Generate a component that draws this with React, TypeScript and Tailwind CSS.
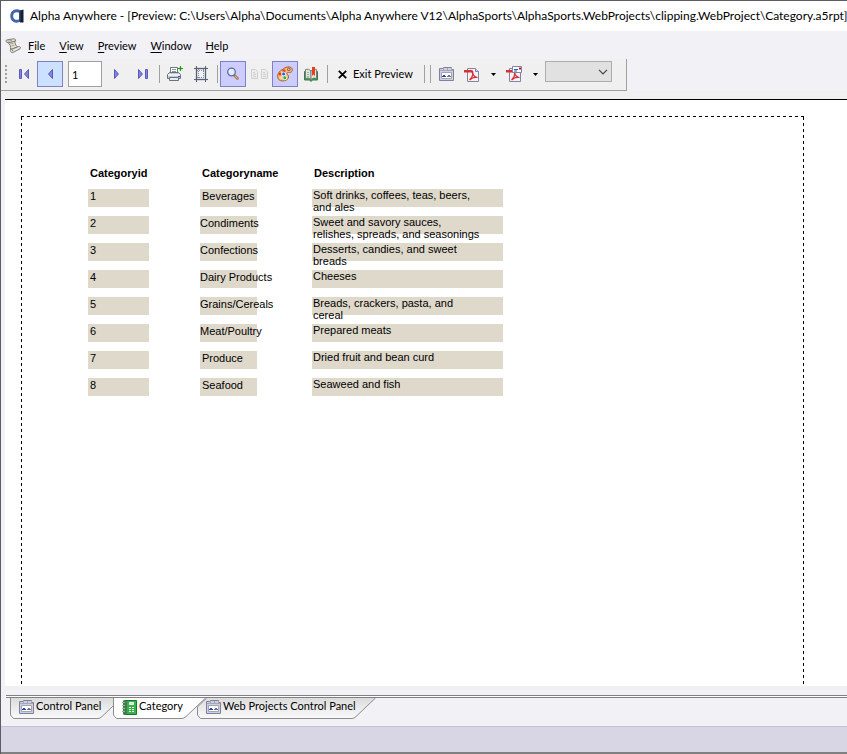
import React from "react";
import clsx from "clsx";

interface Category {
  id: number;
  name: string;
  description: string[];
  inset?: boolean;
}

const menus = ["File", "View", "Preview", "Window", "Help"];

const categories: Category[] = [
  { id: 1, name: "Beverages", description: ["Soft drinks, coffees, teas, beers,", "and ales"], inset: true },
  { id: 2, name: "Condiments", description: ["Sweet and savory sauces,", "relishes, spreads, and seasonings"] },
  { id: 3, name: "Confections", description: ["Desserts, candies, and sweet", "breads"] },
  { id: 4, name: "Dairy Products", description: ["Cheeses"] },
  { id: 5, name: "Grains/Cereals", description: ["Breads, crackers, pasta, and", "cereal"] },
  { id: 6, name: "Meat/Poultry", description: ["Prepared meats"] },
  { id: 7, name: "Produce", description: ["Dried fruit and bean curd"], inset: true },
  { id: 8, name: "Seafood", description: ["Seaweed and fish"], inset: true },
];

// Icons

function AlphaLogo() {
  return (
    <svg width="14" height="14" viewBox="0 0 14 14" fill="none" className="shrink-0">
      <path d="M10 2.500C5 .5 1.700 3 1.700 7s3.300 6.500 8.300 4.500" stroke="#3f66ae" strokeWidth="2.800" />
      <path d="M10 1.500 13.500.5v13H10Z" fill="#16202e" />
      <path d="M9 1.500h1.500v11H9Z" fill="#2c4a80" />
    </svg>
  );
}

function ScriptIcon() {
  return (
    <svg width="16" height="16" viewBox="0 0 16 16" fill="#e4e2d8" stroke="#7d7a70">
      <path d="M3 4.500 10 3c-.5 2 .5 4 2.500 6L5.500 11.500C6 8.500 5 6.500 3 4.500Z" />
      <path d="M1.500 2 8.500.8c1.500-.2 2.500.8 2 2.200L3.500 4.800C1.500 5 .2 3 1.500 2Z" />
      <path d="m6 11.500 7.500-3c1.500-.4 2.500 1 1.500 2.300L8 14.500c-2 .8-3.500-1.800-2-3Z" />
      <path d="m5.500 6 3-.8M6.500 8l3-1M2.500 3.200 7 2.400" stroke="#a8a498" />
      <path d="M7 13.200c.6-.2.800-.9.300-1.300" stroke="#5c584e" />
    </svg>
  );
}

function ArrowIcon({ dir, bar }: { dir: "left" | "right"; bar?: boolean }) {
  return (
    <svg width="12" height="12" viewBox="0 0 12 12" fill="#8484d8" stroke="#5a5ac0" className={clsx(dir === "right" && "-scale-x-100")}>
      {bar && <path d="M1.500 1.500h2v9h-2z" />}
      <path d={bar ? "M10.500 1.500v9L6.500 6Z" : "M8.500 1.500v9L4.500 6Z"} />
    </svg>
  );
}

function PrinterIcon() {
  return (
    <svg width="16" height="16" viewBox="0 0 16 16" fill="none">
      <path d="M3.500 7.500v-6h7v6" fill="#fff" stroke="#707880" />
      <path d="M5 3.500h4M5 5.500h4" stroke="#8c949c" />
      <path d="M.5 12.500v-4l2-2h9l2 2v4Z" fill="#c4ccd4" stroke="#68727c" />
      <path d="M1 9h12" stroke="#eef1f4" strokeWidth="2" />
      <path d="M2.500 11.500h9v3h-9z" fill="#e8ecf0" stroke="#68727c" />
      <path d="M11 10h2v1h-2z" fill="#2050f0" />
      <path d="M13.500 0v5M11 2.500h5" stroke="#14a014" />
      <path d="M12.500 1.500h2v2h-2z" fill="#14a014" />
    </svg>
  );
}

function MarginsIcon() {
  return (
    <svg width="14" height="16" viewBox="0 0 14 16" fill="none">
      <path d="M1 1h12v14H1z" fill="#d4dae4" />
      <path d="M4 4h6v8H4z" fill="#eef1f6" />
      <path d="M2.500 0v16M11.500 0v16M0 2.500h14M0 13.500h14" stroke="#59616c" />
      <path d="M4.500 3v10M9.500 3v10M3 4.500h8M3 11.500h8" stroke="#7f8894" strokeDasharray="1 1" />
    </svg>
  );
}

function ZoomIcon() {
  return (
    <svg width="14" height="14" viewBox="0 0 14 14" fill="none">
      <path d="m8.500 8.500 3 3" stroke="#a87850" strokeWidth="2.600" strokeLinecap="round" />
      <path d="m9 9 2.500 2.500" stroke="#e8b880" />
      <circle cx="5.500" cy="5" r="3.800" fill="#dcecff" stroke="#6868a0" strokeWidth="1.300" />
      <path d="M3.500 4.500 5 3" stroke="#fff" />
    </svg>
  );
}

function PagesIcon() {
  return (
    <svg width="17" height="12" viewBox="0 0 17 12" fill="#ececec" stroke="#cfcfcf">
      <path d="M.5 1.500h4l2 2v7h-6zM10.500 1.500h4l2 2v7h-6z" />
      <path d="M2 4.500h2M2 6.500h3M2 8.500h3M12 4.500h2M12 6.500h3M12 8.500h3" />
    </svg>
  );
}

function PaletteIcon() {
  return (
    <svg width="16" height="16" viewBox="0 0 16 16">
      <path
        d="M6 3.200C8 1 12 .2 14 1.500c2 1.400 1.800 4-.3 4.800-1.700.6-3-.3-3.800.7-.8 1.100 1.900 1.800 1.800 3.800-.1 2.400-3 4.200-6 4.200C2.500 15 .5 13 .6 10.200.7 7.300 3 4.200 6 3.200Z"
        fill="#f4bc78"
        stroke="#a86224"
      />
      <circle cx="7" cy="4.800" r="1.600" fill="#e03c28" />
      <circle cx="11.800" cy="3.400" r="1.300" fill="#ccccff" stroke="#8c5420" />
      <circle cx="3.200" cy="8" r="1.500" fill="#e03c28" />
      <circle cx="6.600" cy="8" r="2" fill="#3060e8" stroke="#fff" strokeWidth=".8" />
      <circle cx="4" cy="11.600" r="1.500" fill="#f8d8a0" />
      <circle cx="7.800" cy="11.800" r="2" fill="#30b040" stroke="#fff" strokeWidth=".8" />
    </svg>
  );
}

function BookIcon() {
  return (
    <svg width="14" height="15" viewBox="0 0 14 15">
      <path d="M.5 4.500v8.500h5l1.500 1.500L8.500 13h5V4.500Z" fill="#3c9c50" stroke="#3c7c4c" />
      <path d="M1.500 2.500c2-.6 4-.2 5.500 1.500v8.500c-1.500-1.500-3.500-1.800-5.500-1Z" fill="#dfe4df" stroke="#788078" />
      <path d="M12.500 2.500c-2-.6-4-.2-5.500 1.500v8.500c1.500-1.500 3.500-1.800 5.500-1Z" fill="#ecece6" stroke="#788078" />
      <path d="M3 5.500h2M3 7.500h2M3 9.500h2" stroke="#a4aca4" />
      <path d="M8 0h3v9L9.500 7.500 8 9Z" fill="#e8401c" />
    </svg>
  );
}

function PanelIcon() {
  return (
    <svg width="15" height="14" viewBox="0 0 15 14" fill="none">
      <path d="M.5 13.500v-12h4v-1h8v2h2v11Z" fill="#d0d0dc" stroke="#8080a0" />
      <path d="M1 3.500h13M4.500 1v2M8.500 1v2M12.500 1v2" stroke="#a4a4ba" />
      <path d="M2.500 5.500h10v6h-10z" fill="#fff" stroke="#a4a4b4" />
      <path d="M4 8h2v1h1v1H3V9h1Z" fill="#2044b0" />
      <path d="M9 8h2v1h1v1H8V9h1Z" fill="#70747c" />
    </svg>
  );
}

function PdfIcon({ mail }: { mail?: boolean }) {
  return (
    <svg width="16" height="16" viewBox="0 0 16 16" fill="none">
      <path d="M3.500 2.500h8l3 3v10h-11Z" fill="#f2f2f8" stroke="#8484a0" />
      {!mail && <path d="M11.500 2.500v3h3" fill="#d4d4e0" stroke="#8484a0" />}
      <path d="M8.500 7c1 3 2.500 4.500 5 4.500-3-.5-6 .5-7.500 2.500M8.500 7c.5 2.500-.8 5-3 7" stroke="#d83030" strokeWidth="1.200" />
      <path d="M0 4h7c2 0 2.500 1 2.500 3.500H8C8 6.500 7.500 6.500 7 6.500H0Z" fill="#d83030" />
      {mail && (
        <>
          <path d="M6.500.5h9v6h-9z" fill="#fff" stroke="#8484a0" />
          <path d="M8 3.500h4M8 5h3" stroke="#3058c8" />
          <path d="M13 1.500h2v2h-2z" fill="#c81c1c" />
        </>
      )}
    </svg>
  );
}

function ReportIcon() {
  return (
    <svg width="15" height="15" viewBox="0 0 15 15" fill="none">
      <path d="M2.500.5h12v14h-12z" fill="#38b04c" stroke="#187828" />
      <path d="M1 .5h4v14H1z" fill="#447c4c" />
      <path d="M0 2.500h3M0 5.500h3M0 8.500h3M0 11.500h3" stroke="#a8b0a8" />
      <path d="M7.500 2.500h4v2h-4z" fill="#c8f0cc" stroke="#eaffea" />
      <path d="M7 7.500h2M10 7.500h2M7 9.500h2M10 9.500h2M7 11.500h2M10 11.500h2" stroke="#eaffea" />
    </svg>
  );
}

// Toolbar parts

interface ToolButtonProps {
  label: string;
  active?: boolean;
  hot?: boolean;
  disabled?: boolean;
  children: React.ReactNode;
}

function ToolButton({ label, active, hot, disabled, children }: ToolButtonProps) {
  return (
    <button
      type="button"
      aria-label={label}
      disabled={disabled}
      className={clsx(
        "flex h-[26px] w-[26px] shrink-0 items-center justify-center border",
        active && "border-[#8080c4] bg-[#ccccff]",
        hot && "border-[#8080c4] bg-[#cce0ff]",
        !active && !hot && "border-transparent"
      )}
    >
      {children}
    </button>
  );
}

function DropArrow({ label }: { label: string }) {
  return (
    <button type="button" aria-label={label} className="flex h-[26px] w-4 shrink-0 items-center justify-center">
      <svg width="5" height="3" viewBox="0 0 5 3">
        <path d="M0 0h5L2.500 3Z" fill="#000" />
      </svg>
    </button>
  );
}

function Separator() {
  return <div className="ml-[3px] mr-[2px] h-[18px] w-px shrink-0 bg-[#a0a0a0]" />;
}

// Bottom tabs

interface SheetTabProps {
  title: string;
  width: number;
  active?: boolean;
  cut?: boolean;
  icon: React.ReactNode;
}

function SheetTab({ title, width, active, cut, icon }: SheetTabProps) {
  const outline = `M.5 ${cut ? 9 : 0}V17L3.500 20.500H${width - 24}Q${width - 22} 20.500 ${width - 20} 18.500L${width - 0.5} 0`;
  return (
    <button
      type="button"
      role="tab"
      aria-selected={!!active}
      style={{ width }}
      className={clsx("relative -mr-[9px] flex h-[21px] items-start gap-[2px] pl-[9px]", active && "z-10 pl-2")}
    >
      <svg className="absolute left-0 top-0" width={width} height="21" fill="none">
        <defs>
          <linearGradient id="tabFill" x1="0" y1="0" x2="0" y2="1">
            <stop offset="0" stopColor="#dcdcdc" />
            <stop offset="1" stopColor="#fafafa" />
          </linearGradient>
        </defs>
        <path d={cut ? `${outline}H9.500Z` : `${outline}H.5Z`} fill={active ? "#fff" : "url(#tabFill)"} />
        <path d={cut ? `M9.500 0L.5 9${outline.slice(outline.indexOf("V"))}` : outline} stroke="#8c8c8c" />
      </svg>
      <span className="relative mt-[2px]">{icon}</span>
      <span className="relative whitespace-nowrap leading-4">{title}</span>
    </button>
  );
}

function ReportTable() {
  return (
    <table className="ml-[66px] mt-12 table-fixed border-collapse text-left font-['Liberation_Sans',Arial,sans-serif] text-[11px] leading-3">
      <thead>
        <tr className="h-6 align-top">
          <th className="w-28 pl-[2px] pt-[2px]">Categoryid</th>
          <th className="w-28 pl-[2px] pt-[2px]">Categoryname</th>
          <th className="w-48 pl-[2px] pt-[2px]">Description</th>
        </tr>
      </thead>
      <tbody>
        {categories.map((cat) => (
          <tr key={cat.id} className="h-[27px] align-top">
            <td>
              <div className="h-[18px] w-[61px] bg-[#dfd9cb] pl-[2px] pt-px">{cat.id}</div>
            </td>
            <td>
              <div className={clsx("h-[18px] w-[57px] whitespace-nowrap bg-[#dfd9cb] pt-px", cat.inset && "pl-[2px]")}>
                {cat.name}
              </div>
            </td>
            <td>
              <div className="h-[18px] w-[191px] whitespace-nowrap bg-[#dfd9cb] pl-px">
                {cat.description.map((line) => (
                  <div key={line}>{line}</div>
                ))}
              </div>
            </td>
          </tr>
        ))}
      </tbody>
    </table>
  );
}

export default function App() {
  return (
    <div className="flex min-h-screen flex-col overflow-hidden border-l border-t border-[#5c5c64] bg-[#f2f1f6] font-[Lato,'Segoe_UI',sans-serif] text-[11px] text-black">
      <header className="flex h-[30px] items-center gap-[6px] bg-white pl-[9px]">
        <AlphaLogo />
        <h1 className="whitespace-nowrap text-[12px]">
          Alpha Anywhere - [Preview: C:\Users\Alpha\Documents\Alpha Anywhere V12\AlphaSports\AlphaSports.WebProjects\clipping.WebProject\Category.a5rpt]
        </h1>
      </header>

      <nav className="flex h-7 items-center gap-[7px] pl-1 pt-[2px]">
        <ScriptIcon />
        <div className="flex gap-[14px]">
          {menus.map((menu) => (
            <button key={menu} type="button">
              <span className="underline underline-offset-2">{menu[0]}</span>
              {menu.slice(1)}
            </button>
          ))}
        </div>
      </nav>

      <div role="toolbar" className="flex h-8 w-[626px] items-start border-b border-r border-[#a0a0a0] bg-[#f0f0f0] pl-1 pt-[2px]">
        <div className="mr-1 mt-1 h-[18px] w-[2px] shrink-0 bg-[repeating-linear-gradient(180deg,#a0a0a0_0_2px,transparent_2px_4px)]" />
        <div className="flex h-[26px] items-center">
          <ToolButton label="First page">
            <ArrowIcon dir="left" bar />
          </ToolButton>
          <ToolButton label="Previous page" hot>
            <ArrowIcon dir="left" />
          </ToolButton>
          <input aria-label="Page number" defaultValue="1" className="ml-[5px] mr-[2px] h-[26px] w-[34px] border border-[#a0a0a0] bg-white px-[3px] outline-none" />
          <ToolButton label="Next page">
            <ArrowIcon dir="right" />
          </ToolButton>
          <ToolButton label="Last page">
            <ArrowIcon dir="right" bar />
          </ToolButton>
          <Separator />
          <ToolButton label="Print">
            <PrinterIcon />
          </ToolButton>
          <ToolButton label="Page margins">
            <MarginsIcon />
          </ToolButton>
          <Separator />
          <ToolButton label="Zoom" active>
            <ZoomIcon />
          </ToolButton>
          <ToolButton label="Two pages" disabled>
            <PagesIcon />
          </ToolButton>
          <ToolButton label="Colors" active>
            <PaletteIcon />
          </ToolButton>
          <ToolButton label="Bookmarks">
            <BookIcon />
          </ToolButton>
          <Separator />
          <button type="button" className="flex h-[26px] w-[91px] shrink-0 items-center gap-[6px] whitespace-nowrap pl-2">
            <svg width="9" height="9" viewBox="0 0 9 9" stroke="#000" strokeWidth="1.800">
              <path d="m.8.8 7.400 7.400M8.200.8.8 8.200" />
            </svg>
            Exit Preview
          </button>
          <Separator />
          <Separator />
          <ToolButton label="Control panel">
            <PanelIcon />
          </ToolButton>
          <ToolButton label="Save as PDF">
            <PdfIcon />
          </ToolButton>
          <DropArrow label="PDF options" />
          <ToolButton label="Mail as PDF">
            <PdfIcon mail />
          </ToolButton>
          <DropArrow label="Mail options" />
        </div>
        <div className="relative ml-[2px]">
          <select aria-label="Zoom level" className="block h-[21px] w-[67px] appearance-none border border-[#acacac] bg-[#e1e1e1]">
            <option value=""></option>
          </select>
          <svg className="pointer-events-none absolute right-1 top-2" width="10" height="6" viewBox="0 0 10 6" fill="none" stroke="#444" strokeWidth="1.200">
            <path d="m1 .8 4 4 4-4" />
          </svg>
        </div>
      </div>

      <div className="h-2 bg-[#f0f0f0]" />
      <main className="ml-1 flex flex-1 flex-col border-t border-black bg-white pt-4">
        {/* printable area */}
        <div className="ml-4 flex w-[783px] flex-1 flex-col">
          <div className="h-px bg-[repeating-linear-gradient(90deg,#000_0_3px,transparent_3px_6px)]" />
          <div className="flex flex-1">
            <div className="w-px bg-[repeating-linear-gradient(180deg,#000_0_3px,transparent_3px_6px)]" />
            <div className="flex-1">
              <ReportTable />
            </div>
            <div className="w-px bg-[repeating-linear-gradient(180deg,#000_0_3px,transparent_3px_6px)]" />
          </div>
        </div>
      </main>
      <div className="ml-1 h-1 bg-[#f0f0f0]" />

      <div className="ml-[5px] mt-[5px] h-[3px] border-y border-[#808080] bg-white" />
      <div role="tablist" className="flex h-[28px] pl-[9px]">
        <SheetTab title="Control Panel" width={112} icon={<PanelIcon />} />
        <SheetTab title="Category" width={93} active icon={<ReportIcon />} />
        <SheetTab title="Web Projects Control Panel" width={179} cut icon={<PanelIcon />} />
      </div>
      <footer className="h-[28px] border-b-2 border-t border-b-[#808080] border-t-[#c4c2d4] bg-[#d8d6e4]" />
    </div>
  );
}
